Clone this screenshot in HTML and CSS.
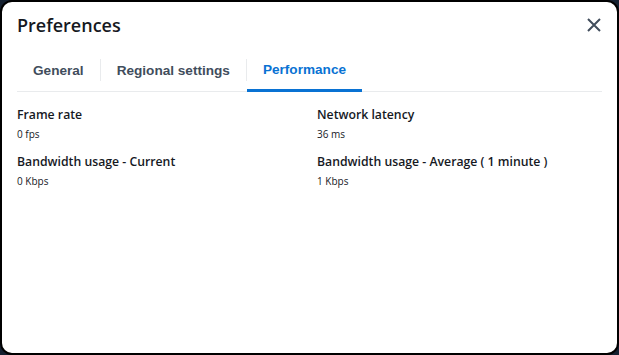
FILE: index.html
```html
<!DOCTYPE html>
<html lang="en">
<head>
<meta charset="utf-8">
<title>Preferences</title>
<link rel="stylesheet" href="styles.css">
</head>
<body>
<div class="dialog">
  <div class="header">
    <h1 class="title">Preferences</h1>
    <button class="close" aria-label="Close">
      <svg width="16" height="16" viewBox="0 0 16 16"><path d="M2 2 L14 14 M14 2 L2 14" stroke="#414d5c" stroke-width="2" fill="none"/></svg>
    </button>
  </div>
  <div class="tabs">
    <div class="tab">General</div>
    <div class="sep"></div>
    <div class="tab">Regional settings</div>
    <div class="sep"></div>
    <div class="tab active">Performance</div>
  </div>
  <div class="grid">
    <div class="item"><div class="label">Frame rate</div><div class="value">0 fps</div></div>
    <div class="item"><div class="label">Network latency</div><div class="value">36 ms</div></div>
    <div class="item"><div class="label">Bandwidth usage - Current</div><div class="value">0 Kbps</div></div>
    <div class="item"><div class="label">Bandwidth usage - Average ( 1 minute )</div><div class="value">1 Kbps</div></div>
  </div>
</div>
</body>
</html>
```
FILE: styles.css
```css
html, body { margin: 0; padding: 0; }
body { background: #142030; width: 619px; height: 355px; overflow: hidden; }
.dialog {
  box-sizing: border-box;
  width: 619px; height: 355px;
  background: #fff;
  border: 2px solid #000;
  border-radius: 12px;
  padding: 0 15px;
}
.header { display: flex; justify-content: space-between; align-items: center; height: 46px; }
.title {
  margin: 0;
  font-family: "Open Sans", sans-serif;
  font-weight: 600;
  font-size: 18px;
  color: #16191f;
}
.close { border: 0; background: none; padding: 0; width: 16px; height: 16px; display: flex; }
.tabs {
  display: flex; align-items: center;
  border-bottom: 1px solid #e9ebed;
  height: 43px;
}
.tab {
  font-family: "Liberation Sans", Arial, sans-serif;
  font-weight: 700;
  font-size: 13.6px;
  color: #414d5c;
  padding: 1px 16px 0;
  height: 43px;
  line-height: 44px;
  box-sizing: border-box;
}
.tab.active { color: #0972d3; border-bottom: 3px solid #0972d3; margin-bottom: -1px; height: 44px; line-height: 41px; }
.sep { width: 1px; height: 22px; background: #e9ebed; }
.grid {
  display: grid;
  grid-template-columns: 1fr 1fr;
  column-gap: 15px;
  row-gap: 11px;
  padding-top: 14px;
}
.label {
  font-family: "Open Sans", sans-serif;
  font-weight: 600;
  font-size: 12.25px;
  line-height: 18px;
  color: #16191f;
}
.value {
  font-family: "Open Sans", sans-serif;
  font-size: 10px;
  line-height: 16px;
  margin-top: 2px;
  color: #16191f;
}
```
